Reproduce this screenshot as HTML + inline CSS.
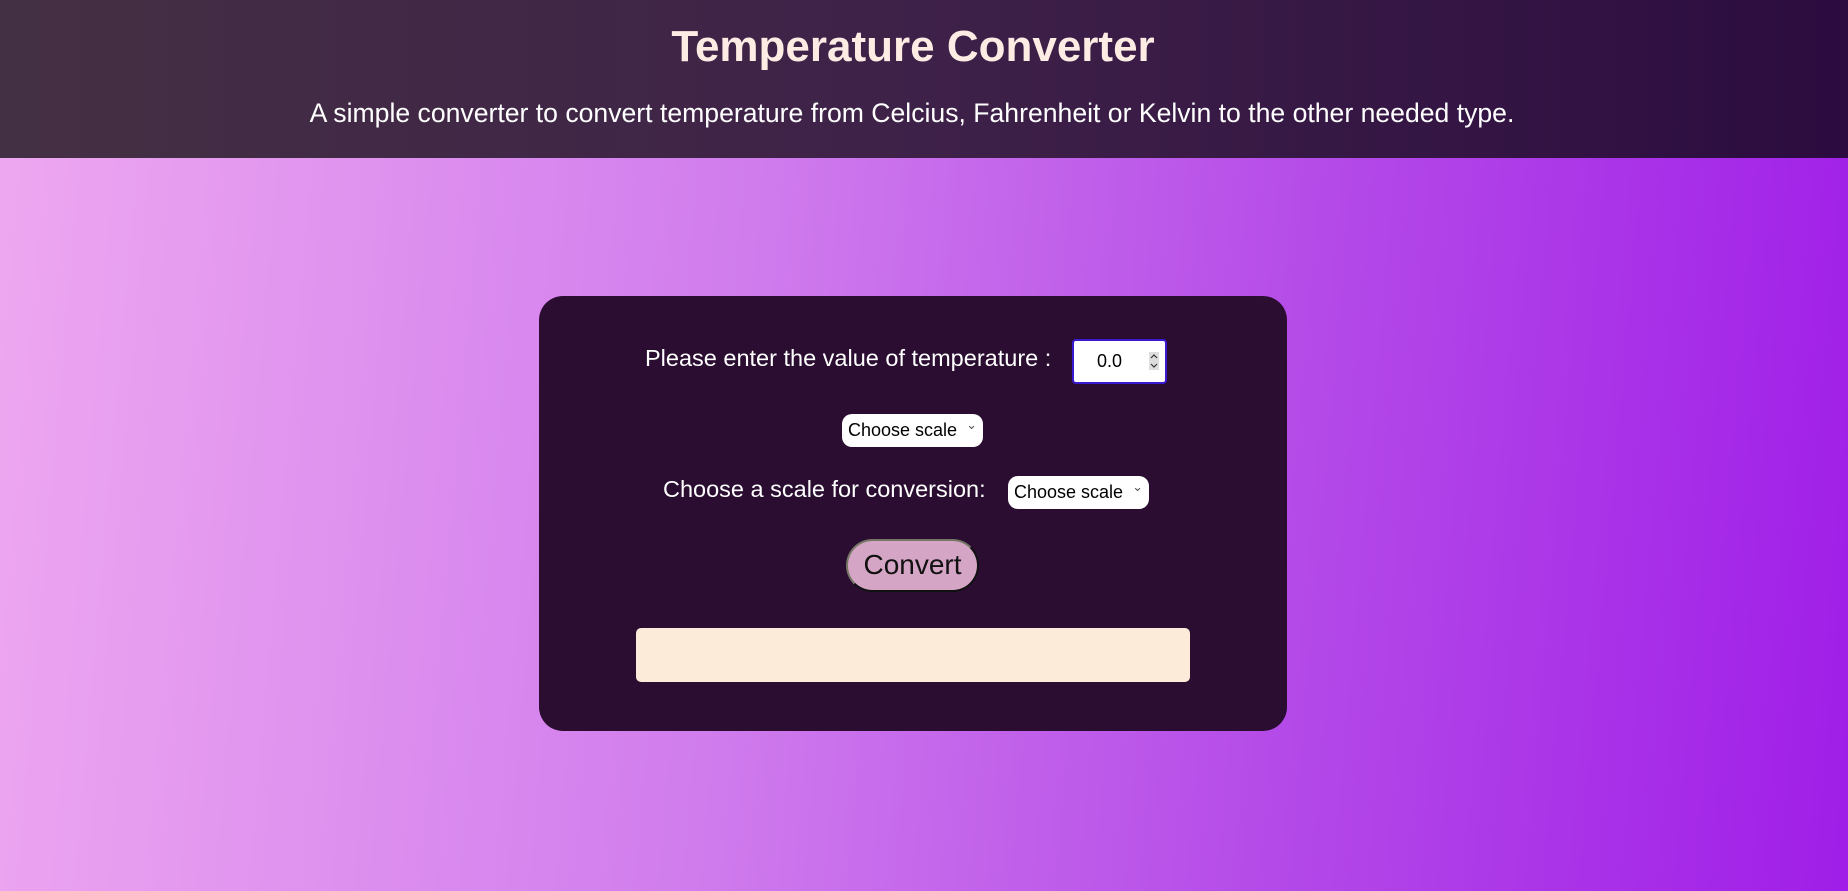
<!DOCTYPE html>
<html><head><meta charset="utf-8"><style>
*{box-sizing:border-box;margin:0;padding:0}
body{width:1848px;height:891px;overflow:hidden;font-family:"Liberation Sans",Arial,sans-serif;background:linear-gradient(95deg,#eea8f0 0%,#d07ced 40%,#b44ae8 70%,#a01ee8 100%);position:relative}
header{position:absolute;left:0;top:0;width:1848px;height:158px;background:linear-gradient(90deg,#443044,#3e2148 50%,#2c0c40);color:#fff;text-align:center}
h1{position:absolute;top:22px;left:-11px;width:100%;font-size:44px;font-weight:bold;color:#fdece4}
header p{position:absolute;top:98px;left:-12px;width:100%;font-size:26.6px}
.card{position:absolute;left:539px;top:296px;width:748px;height:435px;background:#2a0d30;border-radius:24px;color:#fff}
.lbl{position:absolute;font-size:23.5px;white-space:nowrap}
.inp{position:absolute;left:533px;top:43px;width:95px;height:45px;background:#fff;border:2px solid #3a1ad0;border-radius:4px;color:#000;font-size:18px}
.inp span{position:absolute;left:23px;top:10px}
.sel{position:absolute;background:#fff;border-radius:10px;color:#000;font-size:18px;height:33px;padding:6px 0 0 6px;white-space:nowrap}
.sel:after{content:"⌄";position:absolute;right:6px;top:3px;font-size:13px;color:#555}
.btn{position:absolute;left:307px;top:243px;width:133px;height:53px;background:#d4a5c4;border-radius:28px;border:2px solid #111;border-top-color:#776;border-left-color:#776;color:#111;font-size:28px;text-align:center;line-height:48px}
.res{position:absolute;left:97px;top:332px;width:554px;height:54px;background:#fbebd8;border-radius:5px}
</style></head><body>
<header><h1>Temperature Converter</h1><p>A simple converter to convert temperature from Celcius, Fahrenheit or Kelvin to the other needed type.</p></header>
<div class="card">
<div class="lbl" style="left:106px;top:49px">Please enter the value of temperature :</div>
<div class="inp"><span>0.0</span><svg style="position:absolute;right:6px;top:11px" width="10" height="18"><rect width="10" height="18" fill="#ddd"/><path d="M2 6L5 3L8 6M2 12L5 15L8 12" stroke="#333" fill="none" stroke-width="1.2"/></svg></div>
<div class="sel" style="left:303px;top:118px;width:141px">Choose scale</div>
<div class="lbl" style="left:124px;top:180px">Choose a scale for conversion:</div>
<div class="sel" style="left:469px;top:180px;width:141px">Choose scale</div>
<div class="btn">Convert</div>
<div class="res"></div>
</div>
</body></html>
